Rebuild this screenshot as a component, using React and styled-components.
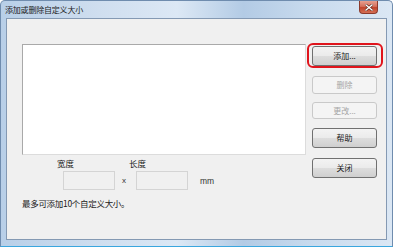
import React from "react"
import styled, { createGlobalStyle } from "styled-components"

const GlobalStyle = createGlobalStyle`
  html, body {
    margin: 0;
    padding: 0;
    background: #ffffff;
  }
  body {
    font-family: "Noto Sans CJK SC", "Liberation Sans", sans-serif;
  }
`

const Window = styled.div`
  width: 393px;
  height: 247px;
  box-sizing: border-box;
  display: flex;
  flex-direction: column;
  border: 1px solid #6f8cae;
  border-bottom-color: #3aa6de;
  border-radius: 5px 5px 0 0;
  background: linear-gradient(
    90deg,
    #b8cfe8 0%,
    #cfdeef 25%,
    #dce8f5 45%,
    #b3cbe5 62%,
    #c9dbee 80%,
    #dbe7f4 100%
  );
  overflow: hidden;
`

const TitleBar = styled.div`
  height: 17px;
  display: flex;
  align-items: center;
  justify-content: space-between;
  padding-left: 4px;
  padding-right: 14px;
`

const TitleText = styled.span`
  font-size: 8px;
  color: #1c1c1c;
  letter-spacing: -0.2px;
  line-height: 1;
`

const CloseButton = styled.div`
  width: 19px;
  height: 13px;
  margin-top: -4px;
  box-sizing: border-box;
  display: flex;
  align-items: center;
  justify-content: center;
  border: 1px solid #8c3a2c;
  border-top: none;
  border-radius: 0 0 4px 4px;
  background: linear-gradient(180deg, #e6a090 0%, #d5705c 45%, #c0432b 55%, #d46f55 100%);
`

const Frame = styled.div`
  flex: 1;
  display: flex;
  padding: 0 5px 6px 5px;
`

const Client = styled.div`
  flex: 1;
  box-sizing: border-box;
  border: 1px solid #8499b3;
  background: #f0f0f0;
  padding: 25px 0 0 15px;
  display: flex;
  align-items: flex-start;
`

const LeftColumn = styled.div`
  display: flex;
  flex-direction: column;
`

const ListBox = styled.div`
  width: 284px;
  height: 111px;
  box-sizing: border-box;
  background: #ffffff;
  border: 1px solid #a9a9a9;
  border-right-color: #dcdcdc;
  border-bottom-color: #dcdcdc;
`

const ButtonColumn = styled.div`
  display: flex;
  flex-direction: column;
  margin-left: 6px;
  padding-top: 2px;
`

const ButtonSlot = styled.div`
  position: relative;
  margin-top: ${p => p.$gap || 0}px;
`

const Highlight = styled.div`
  position: absolute;
  left: -5px;
  right: -6px;
  top: -3px;
  bottom: -2px;
  border: 2px solid #e0141c;
  border-radius: 6px;
  pointer-events: none;
`

const Button = styled.div`
  width: 65px;
  height: ${p => p.$h || 20}px;
  box-sizing: border-box;
  display: flex;
  align-items: center;
  justify-content: center;
  border-radius: 3px;
  font-size: 8px;
  line-height: 1;
  border: 1px solid ${p => (p.$disabled ? "#c9c9c9" : "#707070")};
  color: ${p => (p.$disabled ? "#a6a6a6" : "#1a1a1a")};
  background: ${p =>
    p.$disabled
      ? "#f4f4f4"
      : "linear-gradient(180deg, #f3f3f3 0%, #ebebeb 48%, #dddddd 52%, #cfcfcf 100%)"};
`

const SizeRow = styled.div`
  display: flex;
  align-items: flex-start;
  margin-top: 2px;
  padding-left: 41px;
`

const Field = styled.div`
  display: flex;
  flex-direction: column;
`

const FieldLabel = styled.span`
  font-size: 8.5px;
  line-height: 1;
  color: #1a1a1a;
  height: 12px;
  display: flex;
  align-items: center;
  margin-left: ${p => p.$indent || 0}px;
`

const Input = styled.div`
  width: 52px;
  height: 19px;
  box-sizing: border-box;
  background: #f0f0f0;
  border: 1px solid #d4d4d4;
  margin-top: 2px;
`

const Cross = styled.span`
  font-family: "Liberation Sans", sans-serif;
  font-size: 8px;
  color: #333;
  margin: 20px 10px 0 7px;
  line-height: 1;
`

const Unit = styled.span`
  font-family: "Liberation Sans", sans-serif;
  font-size: 8.5px;
  color: #333;
  margin: 20px 0 0 12px;
  line-height: 1;
`

const Note = styled.div`
  font-size: 8.5px;
  color: #1a1a1a;
  line-height: 1;
  margin-top: 9px;
  letter-spacing: -0.3px;
`

const XIcon = () => (
  <svg width="8" height="7" viewBox="0 0 8 7">
    <path d="M1 1 L7 6 M7 1 L1 6" stroke="#5a2418" strokeWidth="2.6" strokeLinecap="square" />
    <path d="M1 1 L7 6 M7 1 L1 6" stroke="#ffffff" strokeWidth="1.4" strokeLinecap="square" />
  </svg>
)

const buttons = [
  { label: "添加...", gap: 0, h: 20, highlight: true },
  { label: "删除", gap: 10, h: 18, disabled: true },
  { label: "更改...", gap: 8, h: 17, disabled: true },
  { label: "帮助", gap: 9, h: 20 },
  { label: "关闭", gap: 10, h: 20 },
]

const App = () => (
  <>
    <GlobalStyle />
    <Window>
      <TitleBar>
        <TitleText>添加或删除自定义大小</TitleText>
        <CloseButton>
          <XIcon />
        </CloseButton>
      </TitleBar>
      <Frame>
        <Client>
          <LeftColumn>
            <ListBox />
            <SizeRow>
              <Field>
                <FieldLabel $indent={-6}>宽度</FieldLabel>
                <Input />
              </Field>
              <Cross>x</Cross>
              <Field>
                <FieldLabel $indent={-7}>长度</FieldLabel>
                <Input />
              </Field>
              <Unit>mm</Unit>
            </SizeRow>
            <Note>最多可添加10个自定义大小。</Note>
          </LeftColumn>
          <ButtonColumn>
            {buttons.map((b, i) => (
              <ButtonSlot key={i} $gap={b.gap}>
                <Button $disabled={b.disabled} $h={b.h}>
                  {b.label}
                </Button>
                {b.highlight && <Highlight />}
              </ButtonSlot>
            ))}
          </ButtonColumn>
        </Client>
      </Frame>
    </Window>
  </>
)

export default App
